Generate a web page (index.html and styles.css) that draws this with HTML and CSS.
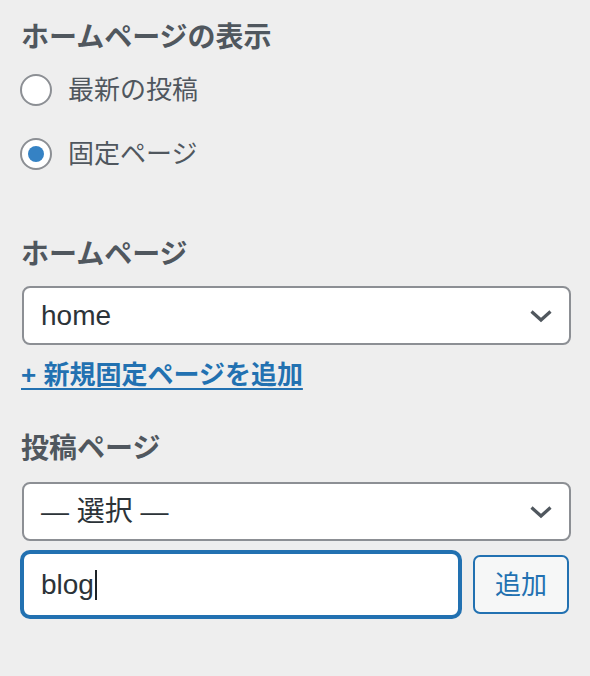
FILE: index.html
```html
<!DOCTYPE html>
<html lang="ja">
<head>
<meta charset="utf-8">
<title>ホームページ設定</title>
<link rel="stylesheet" href="styles.css">
</head>
<body>
<div class="panel">
  <div class="control">
    <h2 class="control-title first">ホームページの表示</h2>
    <ul class="radio-list">
      <li class="radio-row"><span class="radio"></span><span class="radio-label">最新の投稿</span></li>
      <li class="radio-row"><span class="radio checked"></span><span class="radio-label">固定ページ</span></li>
    </ul>
  </div>

  <div class="control">
    <h2 class="control-title second">ホームページ</h2>
    <div class="select select-one">
      <span class="select-value">home</span>
      <svg class="chevron" viewBox="0 0 24 14" width="24" height="14"><path d="M2.5 2.5 L12 11 L21.5 2.5" fill="none" stroke="#50575e" stroke-width="3.2" stroke-linecap="butt" stroke-linejoin="miter"/></svg>
    </div>
    <a class="add-link" href="#">+ 新規固定ページを追加</a>
  </div>

  <div class="control">
    <h2 class="control-title third">投稿ページ</h2>
    <div class="select select-two">
      <span class="select-value">— 選択 —</span>
      <svg class="chevron" viewBox="0 0 24 14" width="24" height="14"><path d="M2.5 2.5 L12 11 L21.5 2.5" fill="none" stroke="#50575e" stroke-width="3.2" stroke-linecap="butt" stroke-linejoin="miter"/></svg>
    </div>
    <div class="new-row">
      <div class="text-input"><span class="input-value">blog</span><span class="caret"></span></div>
      <button class="add-button" type="button">追加</button>
    </div>
  </div>
</div>
</body>
</html>
```

FILE: styles.css
```css
html, body {
  margin: 0;
  padding: 0;
  background: #eeeeee;
}

body {
  font-family: "Liberation Sans", "Noto Sans CJK JP", sans-serif;
  color: #50575e;
  width: 590px;
  height: 676px;
  overflow: hidden;
}

.panel {
  padding: 0 19px 0 22px;
  display: flex;
  flex-direction: column;
}

.control {
  display: flex;
  flex-direction: column;
}

.control-title {
  margin: 0;
  font-size: 28px;
  line-height: 40px;
  font-weight: 700;
  color: #50575e;
  margin-left: -1px;
}

.control-title.first { margin-top: 18px; }
.control-title.second { margin-top: 49px; }
.control-title.third { margin-top: 36px; }

.radio-list {
  list-style: none;
  margin: 0;
  padding: 0;
}

.radio-row {
  height: 64px;
  display: flex;
  align-items: center;
  gap: 16px;
  margin-left: -2px;
}

.radio {
  width: 32px;
  height: 32px;
  box-sizing: border-box;
  border: 2px solid #8c8f94;
  border-radius: 50%;
  background: #ffffff;
  display: flex;
  align-items: center;
  justify-content: center;
  flex: none;
}

.radio.checked::after {
  content: "";
  width: 16px;
  height: 16px;
  border-radius: 50%;
  background: #3582c4;
}

.radio-label {
  font-size: 26px;
  line-height: 36px;
  color: #50575e;
}

.select {
  height: 59px;
  box-sizing: border-box;
  border: 2px solid #8c8f94;
  border-radius: 8px;
  background: #ffffff;
  display: flex;
  align-items: center;
  justify-content: space-between;
  padding: 0 16px 0 17px;
}

.select-one { margin-top: 11px; }
.select-two { margin-top: 13px; }

.select-value {
  font-size: 28px;
  color: #2c3338;
  line-height: 40px;
}

.chevron {
  display: block;
}

.add-link {
  margin-top: 12px;
  font-size: 26px;
  line-height: 36px;
  font-weight: 700;
  color: #2271b1;
  text-decoration: underline;
  text-decoration-thickness: 2px;
  text-underline-offset: 4px;
  align-self: flex-start;
  margin-left: -1px;
}

.new-row {
  margin-top: 11px;
  display: flex;
  align-items: center;
  gap: 13px;
}

.text-input {
  flex: 1;
  height: 65px;
  box-sizing: border-box;
  border: 2px solid #2271b1;
  box-shadow: 0 0 0 2px #2271b1;
  border-radius: 8px;
  background: #ffffff;
  display: flex;
  align-items: center;
  padding: 0 17px;
}

.input-value {
  font-size: 28px;
  line-height: 40px;
  color: #2c3338;
}

.caret {
  width: 2px;
  height: 30px;
  background: #1d2327;
  margin-left: 1px;
}

.add-button {
  width: 96px;
  height: 59px;
  margin-right: 2px;
  box-sizing: border-box;
  border: 2px solid #2271b1;
  border-radius: 7px;
  background: #f6f7f7;
  color: #2271b1;
  font-family: "Liberation Sans", "Noto Sans CJK JP", sans-serif;
  font-size: 26px;
  padding: 0;
  line-height: 1;
}
```
